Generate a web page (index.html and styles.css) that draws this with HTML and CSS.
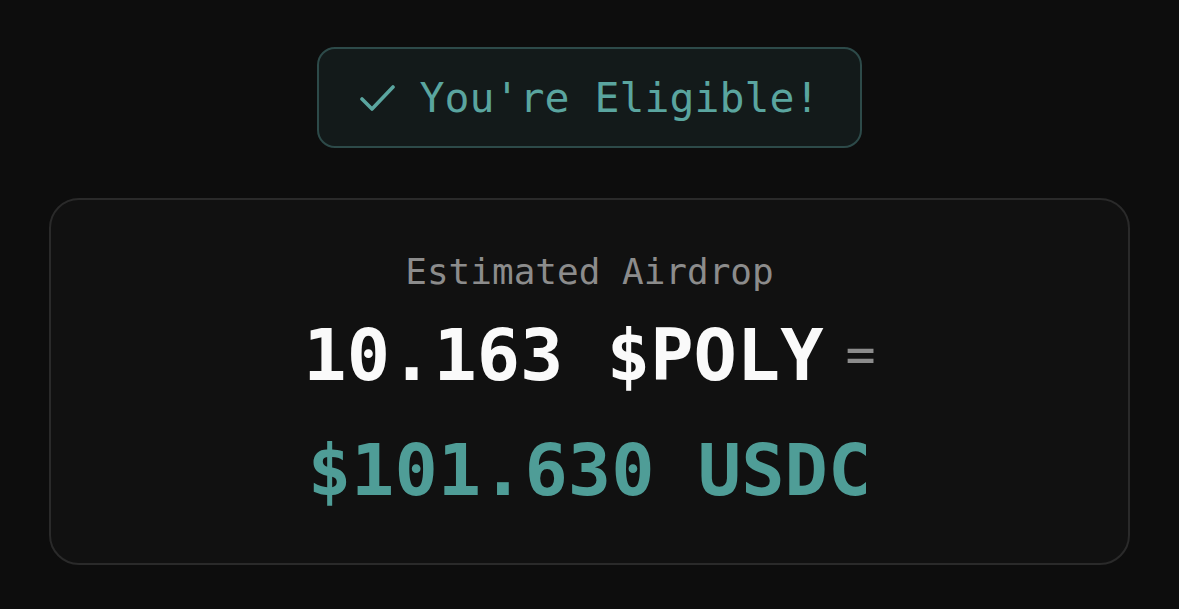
FILE: index.html
```html
<!DOCTYPE html>
<html>

<head>
    <meta charset="UTF-8">
    <title>Airdrop Check</title>
    <link rel="stylesheet" href="styles.css">
</head>

<body>

    <div class="page">
        <div class="badge">
            <svg class="check" width="36" height="28" viewBox="0 0 36 28">
                <polyline points="2,15 12,25 33,3" fill="none" stroke="currentColor" stroke-width="3.6" stroke-linecap="round" stroke-linejoin="round"/>
            </svg>
            <span class="badge-text">You're Eligible!</span>
        </div>

        <div class="card">
            <p class="label">Estimated Airdrop</p>
            <div class="amount-row">
                <span class="amount">10.163 $POLY</span>
                <span class="equals">=</span>
            </div>
            <div class="usd">$101.630 USDC</div>
        </div>
    </div>

</body>

</html>
```

FILE: styles.css
```css
/* Basic Reset */
* {
    box-sizing: border-box;
    margin: 0;
    padding: 0;
}

body {
    font-family: "DejaVu Sans Mono", "Liberation Mono", monospace;
    background: #0d0d0d;
    color: #fff;
}

.page {
    display: flex;
    flex-direction: column;
    align-items: center;
    padding-top: 47px;
}

.badge {
    width: 545px;
    height: 101px;
    display: flex;
    align-items: center;
    justify-content: center;
    gap: 24px;
    background: #131a1a;
    border: 2px solid #2d4a49;
    border-radius: 18px;
    color: #5aa59f;
}

.check {
    display: block;
}

.badge-text {
    font-size: 41.5px;
    line-height: 1;
}

.card {
    width: 1081px;
    height: 367px;
    margin-top: 50px;
    background: #111111;
    border: 2px solid #2a2a2a;
    border-radius: 30px;
    display: flex;
    flex-direction: column;
    align-items: center;
    padding-top: 52px;
}

.label {
    font-size: 36px;
    line-height: 40px;
    color: #8c8c8c;
}

.amount-row {
    display: flex;
    align-items: center;
    gap: 22px;
    margin-top: 18px;
}

.amount {
    font-size: 72px;
    font-weight: bold;
    line-height: 90px;
    color: #fafafa;
}

.equals {
    font-size: 50px;
    color: #8c8c8c;
}

.usd {
    margin-top: 25px;
    font-size: 72px;
    font-weight: bold;
    line-height: 90px;
    color: #4f9d97;
}
```
